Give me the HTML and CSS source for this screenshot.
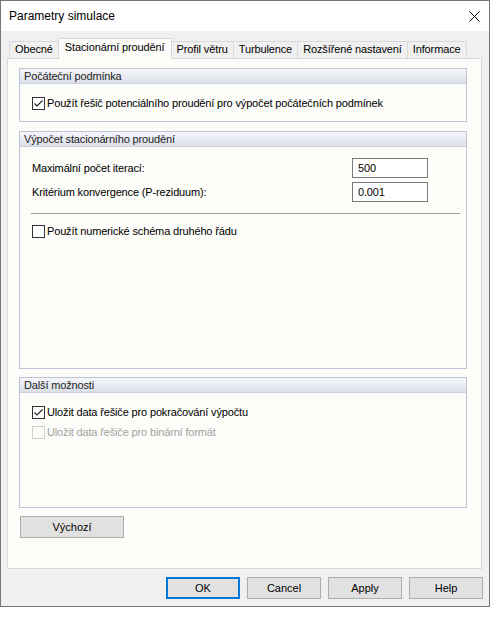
FILE: index.html
```html
<!DOCTYPE html>
<html lang="cs">
<head>
  <meta charset="UTF-8" />
  <title>Parametry simulace</title>
  <link rel="stylesheet" href="styles.css">
</head>
<body>

<div class="window">
  <div class="titlebar">
    <span>Parametry simulace</span>
    <svg class="close" width="11" height="11" viewBox="0 0 11 11">
      <path d="M0.5 0.5 L10.5 10.5 M10.5 0.5 L0.5 10.5" stroke="#000" stroke-width="1" fill="none"/>
    </svg>
  </div>

  <div class="tabs">
    <div class="tab">Obecné</div>
    <div class="tab active">Stacionární proudění</div>
    <div class="tab">Profil větru</div>
    <div class="tab">Turbulence</div>
    <div class="tab">Rozšířené nastavení</div>
    <div class="tab">Informace</div>
  </div>

  <div class="page">
    <div class="group">
      <div class="group-head">Počáteční podmínka</div>
      <div class="group-body">
        <label class="check"><span class="box"><svg width="11" height="11" viewBox="0 0 11 11"><path d="M1.5 5.5 L4 8 L9.5 2.5" stroke="#222" stroke-width="1.1" fill="none"/></svg></span>Použít řešič potenciálního proudění pro výpočet počátečních podmínek</label>
      </div>
    </div>

    <div class="group main">
      <div class="group-head">Výpočet stacionárního proudění</div>
      <div class="group-body first-row">
        <div class="field">
          <label>Maximální počet iterací:</label>
          <div class="input">500</div>
        </div>
        <div class="field">
          <label>Kritérium konvergence (P-reziduum):</label>
          <div class="input">0.001</div>
        </div>
        <div class="separator"></div>
        <label class="check spaced"><span class="box"></span>Použít numerické schéma druhého řádu</label>
      </div>
    </div>

    <div class="group more">
      <div class="group-head">Další možnosti</div>
      <div class="group-body">
        <label class="check"><span class="box"><svg width="11" height="11" viewBox="0 0 11 11"><path d="M1.5 5.5 L4 8 L9.5 2.5" stroke="#222" stroke-width="1.1" fill="none"/></svg></span>Uložit data řešiče pro pokračování výpočtu</label>
        <label class="check disabled"><span class="box"></span>Uložit data řešiče pro binární formát</label>
      </div>
    </div>

    <button class="btn reset">Výchozí</button>
  </div>

  <div class="buttons">
    <button class="btn default">OK</button>
    <button class="btn">Cancel</button>
    <button class="btn">Apply</button>
    <button class="btn">Help</button>
  </div>
</div>

</body>
</html>
```

FILE: styles.css
```css
* {
  box-sizing: border-box;
}
body {
  margin: 0;
  background: #fff;
  font-family: "Liberation Sans", Arial, sans-serif;
  font-size: 11px;
  color: #000;
}
.window {
  width: 490px;
  height: 607px;
  border: 1px solid #777;
  background: #f0f0f0;
}
.titlebar {
  height: 30px;
  background: #fff;
  display: flex;
  align-items: center;
  justify-content: space-between;
  padding: 0 9px 0 8px;
  font-size: 12px;
}

/* tabs */
.tabs {
  display: flex;
  align-items: flex-end;
  height: 27px;
  margin-left: 8px;
  letter-spacing: -0.12px;
}
.tab {
  height: 17px;
  line-height: 15px;
  padding: 0 5px;
  border: 1px solid #d9d9d9;
  border-bottom: none;
  margin-left: -1px;
  background: #f0f0f0;
}
.tab:first-child {
  margin-left: 0;
}
.tab.active {
  height: 21px;
  line-height: 17px;
  margin-bottom: -1px;
  padding: 0 6px;
  background: #fcfcf9;
  position: relative;
  z-index: 1;
}

.page {
  margin-left: 6px;
  width: 475px;
  height: 511px;
  border: 1px solid #d9d9d9;
  background: #fcfcf9;
  padding: 9px 14px 0 11px;
  letter-spacing: -0.15px;
}

/* group boxes */
.group {
  border: 1px solid #bcc3d4;
  background: #fcfcf9;
}
.group + .group {
  margin-top: 9px;
}
.group.main {
  height: 238px;
}
.group.more {
  height: 131px;
  margin-top: 8px;
}
.group-head {
  height: 15px;
  line-height: 14px;
  padding-left: 4px;
  color: #222;
  background: linear-gradient(#f6f7fa, #dbdfe9);
  border-bottom: 1px solid #ccd1dd;
}
.group-body {
  padding: 9px 12px 8px;
}
.group-body.first-row {
  padding-top: 11px;
}

.check {
  display: flex;
  align-items: center;
  height: 20px;
}
.check.spaced {
  margin-top: 7px;
}
.box {
  width: 13px;
  height: 13px;
  border: 1px solid #333;
  background: #fff;
  margin-right: 2px;
  flex: none;
}
.box svg {
  display: block;
}
.check.disabled {
  color: #a3a3a3;
}
.check.disabled .box {
  border-color: #cfcfcf;
  background: #fcfcf9;
}

.field {
  display: flex;
  align-items: center;
  height: 20px;
}
.field + .field {
  margin-top: 4px;
}
.field label {
  width: 320px;
}
.input {
  width: 76px;
  height: 20px;
  line-height: 18px;
  border: 1px solid #7a7a7a;
  background: #fff;
  padding-left: 5px;
}
.separator {
  margin: 11px -6px 0 -1px;
  border-top: 1px solid #a0a0a0;
}

/* buttons */
.btn {
  height: 22px;
  width: 74px;
  border: 1px solid #adadad;
  background: #e1e1e1;
  font-family: "Liberation Sans", Arial, sans-serif;
  font-size: 11px;
  letter-spacing: 0;
  color: #000;
  padding: 0;
}
.btn.reset {
  display: block;
  width: 104px;
  margin: 8px 0 0 1px;
}
.btn.default {
  border: 2px solid #0078d7;
}
.buttons {
  display: flex;
  justify-content: flex-end;
  gap: 7px;
  margin-top: 8px;
  padding-right: 6px;
}
```
